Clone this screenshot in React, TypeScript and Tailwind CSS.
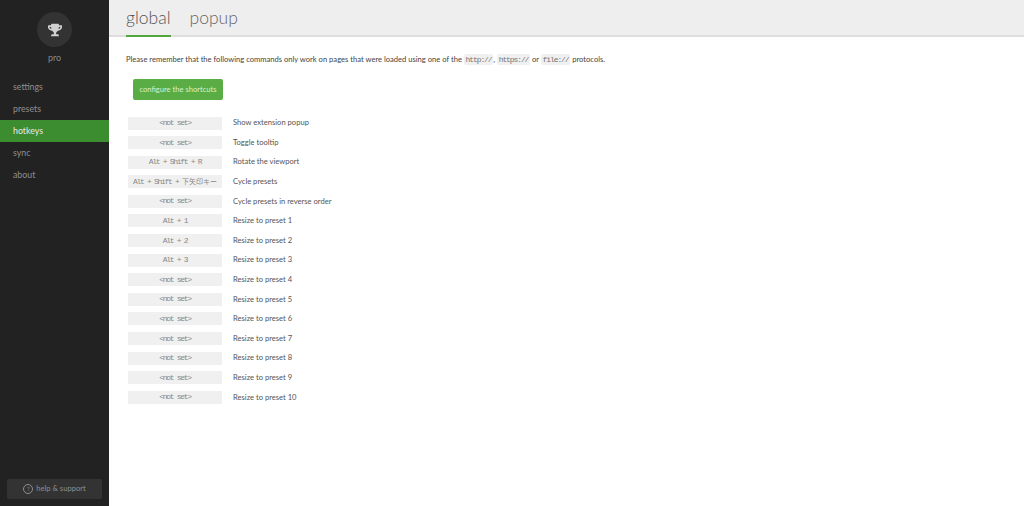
import type { ReactNode } from 'react';
import { FaTrophy } from 'react-icons/fa';

const NAV_ITEMS = ['settings', 'presets', 'hotkeys', 'sync', 'about'];

const HOTKEYS: [ReactNode, string][] = [
  ['<not set>', 'Show extension popup'],
  ['<not set>', 'Toggle tooltip'],
  ['Alt + Shift + R', 'Rotate the viewport'],
  [
    <>
      Alt + Shift + <span className="text-[7px] tracking-normal">下矢印キー</span>
    </>,
    'Cycle presets',
  ],
  ['<not set>', 'Cycle presets in reverse order'],
  ['Alt + 1', 'Resize to preset 1'],
  ['Alt + 2', 'Resize to preset 2'],
  ['Alt + 3', 'Resize to preset 3'],
  ['<not set>', 'Resize to preset 4'],
  ['<not set>', 'Resize to preset 5'],
  ['<not set>', 'Resize to preset 6'],
  ['<not set>', 'Resize to preset 7'],
  ['<not set>', 'Resize to preset 8'],
  ['<not set>', 'Resize to preset 9'],
  ['<not set>', 'Resize to preset 10'],
];

const Code = ({ children }: { children: string }) => (
  <code className="rounded-[2px] bg-[#f0f0f0] px-[1.75px] py-[1px] text-[8px] tracking-[-1.1px] text-[#777] font-['Liberation_Mono',monospace]">
    {children}
  </code>
);

export default function App() {
  return (
    <div className="flex h-[506px] w-[1024px] overflow-hidden bg-white font-['Lato',sans-serif]">
      <aside className="flex w-[109px] shrink-0 flex-col bg-[#222222]">
        <div className="flex flex-col items-center pt-[12px]">
          <div className="flex h-[35px] w-[35px] items-center justify-center rounded-full bg-[#333333]">
            <FaTrophy size={14} className="text-[#d0d0d0]" />
          </div>
          <div className="mt-[5px] text-[9px] leading-[12px] text-[#888888]">pro</div>
        </div>
        <nav className="mt-[12px] flex flex-col">
          {NAV_ITEMS.map((item) => (
            <div
              key={item}
              className={
                item === 'hotkeys'
                  ? 'h-[22px] bg-[#3c8c30] pl-[13px] text-[8.8px] leading-[21px] text-[#e8e8e8]'
                  : 'h-[22px] pl-[13px] text-[8.8px] leading-[21px] text-[#8f8f8f]'
              }
            >
              {item}
            </div>
          ))}
        </nav>
        <div className="mt-auto px-[7px] pb-[7px]">
          <div className="flex h-[20px] items-center justify-center gap-[3px] rounded-[2px] bg-[#333333] text-[7.6px] text-[#8f8f8f]">
            <span className="flex h-[10px] w-[10px] items-center justify-center rounded-full border border-[#8f8f8f] text-[6px] leading-none">
              ?
            </span>
            help &amp; support
          </div>
        </div>
      </aside>

      <main className="flex min-w-0 flex-1 flex-col">
        <header className="flex h-[37px] gap-[19px] border-b-2 border-[#dddddd] bg-[#eeeeee] pl-[17px]">
          <div className="h-[37px] border-b-2 border-[#52a63c] text-[17.5px] font-light leading-[35px] text-[#555555]">
            global
          </div>
          <div className="text-[17.5px] font-light leading-[35px] text-[#666666]">popup</div>
        </header>

        <div className="flex flex-col pl-[17px] pt-[16px]">
          <p className="text-[7.6px] leading-[13px] text-[#444444]">
            Please remember that the following commands only work on pages that were loaded using one of the{' '}
            <Code>http://</Code>, <Code>https://</Code> or <Code>file://</Code> protocols.
          </p>

          <button
            type="button"
            className="ml-[7px] mt-[13px] h-[21px] w-[90px] rounded-[2px] bg-[#5aad44] text-[7.6px] text-[#d8f0cc]"
          >
            configure the shortcuts
          </button>

          <ul className="mt-[16.5px] flex flex-col gap-[6.6px] pl-[2px]">
            {HOTKEYS.map(([keys, label], i) => (
              <li key={i} className="flex h-[13px] items-center gap-[11px]">
                <span className="flex h-[13px] w-[94px] items-center justify-center whitespace-pre bg-[#f0f0f0] text-[8px] tracking-[-1.3px] text-[#888888] font-['Liberation_Mono','Noto_Sans_CJK_JP',monospace]">
                  {keys}
                </span>
                <span className="text-[7.6px] text-[#555555]">{label}</span>
              </li>
            ))}
          </ul>
        </div>
      </main>
    </div>
  );
}
